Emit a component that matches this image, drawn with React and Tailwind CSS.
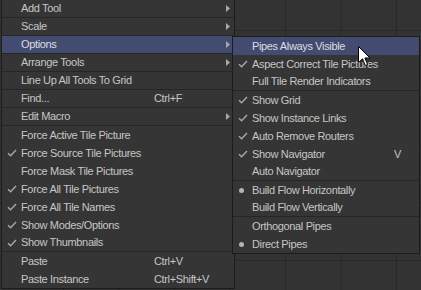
import React from 'react';

const mainItems = [
  { label: 'Add Tool', arrow: true, sep: true },
  { label: 'Scale', arrow: true, sep: true },
  { label: 'Options', arrow: true, sep: true, active: true },
  { label: 'Arrange Tools', arrow: true, sep: true },
  { label: 'Line Up All Tools To Grid', sep: true },
  { label: 'Find...', shortcut: 'Ctrl+F', sep: true },
  { label: 'Edit Macro', arrow: true, sep: true },
  { label: 'Force Active Tile Picture' },
  { label: 'Force Source Tile Pictures', mark: 'check' },
  { label: 'Force Mask Tile Pictures' },
  { label: 'Force All Tile Pictures', mark: 'check' },
  { label: 'Force All Tile Names', mark: 'check' },
  { label: 'Show Modes/Options', mark: 'check' },
  { label: 'Show Thumbnails', mark: 'check', sep: true },
  { label: 'Paste', shortcut: 'Ctrl+V' },
  { label: 'Paste Instance', shortcut: 'Ctrl+Shift+V' },
];

const subItems = [
  { label: 'Pipes Always Visible', active: true },
  { label: 'Aspect Correct Tile Pictures', mark: 'check' },
  { label: 'Full Tile Render Indicators', sep: true },
  { label: 'Show Grid', mark: 'check' },
  { label: 'Show Instance Links', mark: 'check' },
  { label: 'Auto Remove Routers', mark: 'check' },
  { label: 'Show Navigator', mark: 'check', shortcut: 'V' },
  { label: 'Auto Navigator', sep: true },
  { label: 'Build Flow Horizontally', mark: 'dot' },
  { label: 'Build Flow Vertically', sep: true },
  { label: 'Orthogonal Pipes' },
  { label: 'Direct Pipes', mark: 'dot' },
];

const Check = () => (
  <svg width="10" height="8" viewBox="0 0 10 8">
    <path d="M1 4.2 L3.6 6.8 L9 1" fill="none" stroke="#a9a9a9" strokeWidth="1.4" />
  </svg>
);

const Dot = () => <span className="block w-[5px] h-[5px] rounded-full bg-[#b4b4b4] ml-[1px]" />;

const Arrow = () => (
  <svg width="4" height="7" viewBox="0 0 4 7">
    <path d="M0 0 L4 3.5 L0 7 Z" fill="#a8a8a8" />
  </svg>
);

const Row = ({ item, labelW }) => (
  <div
    className={`flex items-center h-[18px] ${item.sep ? 'border-b border-[#262626]' : ''} ${
      item.active ? 'bg-[#444b70] text-[#dcdde6]' : 'text-[#c6c6c6]'
    }`}
  >
    <div className="w-[19px] pl-[5px] flex items-center">
      {item.mark === 'check' && <Check />}
      {item.mark === 'dot' && <Dot />}
    </div>
    <div className={`${labelW} whitespace-nowrap`}>{item.label}</div>
    <div className="whitespace-nowrap">{item.shortcut}</div>
    {item.arrow && (
      <div className="ml-auto mr-[4px] flex items-center">
        <Arrow />
      </div>
    )}
  </div>
);

const Cursor = () => (
  <svg className="absolute left-[358px] top-[46px]" width="13" height="21" viewBox="0 0 13 21">
    <path
      d="M0.5 0.5 L0.5 16.5 L4.5 12.8 L7.3 19.5 L9.6 18.5 L6.9 12 L12 12 Z"
      fill="#ffffff"
      stroke="#000000"
      strokeWidth="1"
      strokeLinejoin="miter"
    />
  </svg>
);

export default function App() {
  return (
    <div className="relative w-[421px] h-[290px] overflow-hidden bg-[#333333] bg-[linear-gradient(to_right,#292929_1px,transparent_1px),linear-gradient(to_bottom,#292929_1px,transparent_1px)] bg-[size:55.5px_57.5px] bg-[position:7.5px_30px] font-['Liberation_Sans',Arial,sans-serif] text-[11px] tracking-[-0.35px]">
      <div className="absolute left-px top-0 w-[234px] bg-[#353535] border-x border-b border-[#1c1c1c]">
        {mainItems.map((it) => (
          <Row key={it.label} item={it} labelW="w-[133px]" />
        ))}
      </div>
      <div className="absolute left-[232px] top-[36px] w-[188px] bg-[#353535] border border-[#1c1c1c]">
        {subItems.map((it) => (
          <Row key={it.label} item={it} labelW="w-[142px]" />
        ))}
      </div>
      <Cursor />
    </div>
  );
}
